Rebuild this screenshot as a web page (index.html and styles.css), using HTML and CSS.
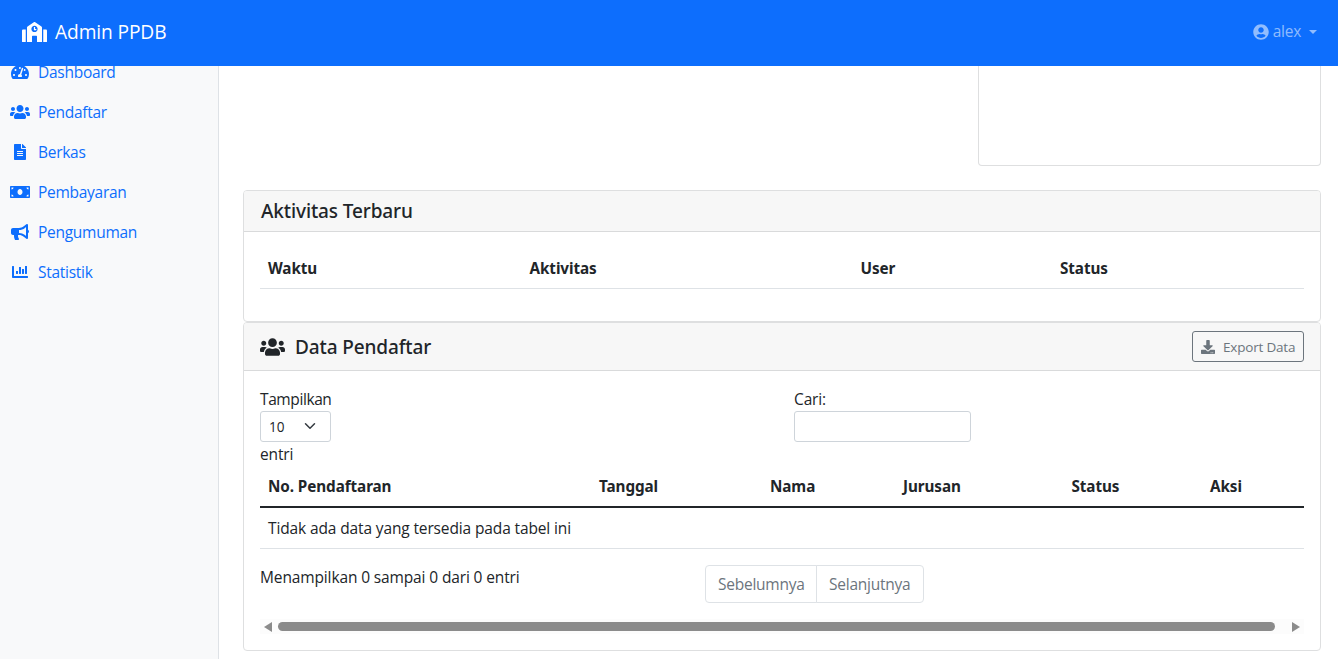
FILE: index.html
```html
<!DOCTYPE html>
<html lang="id">
<head>
<meta charset="utf-8">
<title>Admin PPDB</title>
<link rel="stylesheet" href="styles.css">
</head>
<body>
<svg class="defs" aria-hidden="true">
  <symbol id="users" viewBox="0 0 640 512"><path d="M96 224c35.3 0 64-28.7 64-64s-28.7-64-64-64-64 28.700-64 64 28.700 64 64 64zm448 0c35.300 0 64-28.700 64-64s-28.700-64-64-64-64 28.700-64 64 28.700 64 64 64zm32 32h-64c-17.600 0-33.500 7.100-45.100 18.600 40.300 22.100 68.900 62 75.100 109.400h66c17.700 0 32-14.300 32-32v-32c0-35.300-28.700-64-64-64zm-256 0c61.900 0 112-50.100 112-112S381.900 32 320 32 208 82.100 208 144s50.100 112 112 112zm76.800 32h-8.300c-20.800 10-43.900 16-68.500 16s-47.600-6-68.500-16h-8.300C179.600 288 128 339.600 128 403.200V432c0 26.500 21.500 48 48 48h288c26.500 0 48-21.500 48-48v-28.800c0-63.600-51.600-115.200-115.200-115.200zm-223.700-13.400C161.500 263.100 145.600 256 128 256H64c-35.300 0-64 28.700-64 64v32c0 17.700 14.300 32 32 32h65.900c6.300-47.400 34.900-87.300 75.200-109.400z"/></symbol>
</svg>

<nav class="navbar">
  <a class="brand"><svg class="brand-icon" viewBox="0 0 640 512"><path d="M0 224v272c0 8.840 7.160 16 16 16h80V192H32c-17.670 0-32 14.330-32 32zm360-48h-24v-40c0-4.420-3.580-8-8-8h-16c-4.420 0-8 3.580-8 8v64c0 4.420 3.580 8 8 8h48c4.420 0 8-3.580 8-8v-16c0-4.420-3.580-8-8-8zm137.750-63.960l-160-106.670a32.020 32.020 0 0 0-35.500 0l-160 106.670A32.002 32.002 0 0 0 128 138.660V512h128V368c0-8.840 7.160-16 16-16h96c8.840 0 16 7.160 16 16v144h128V138.670c0-10.700-5.350-20.700-14.250-26.630zM320 256c-44.180 0-80-35.820-80-80s35.820-80 80-80 80 35.820 80 80-35.820 80-80 80zm288-64h-64v320h80c8.840 0 16-7.160 16-16V224c0-17.670-14.330-32-32-32z"/></svg><span>Admin PPDB</span></a>
  <a class="account"><svg class="account-icon" viewBox="0 0 496 512"><path d="M248 8C111 8 0 119 0 256s111 248 248 248 248-111 248-248S385 8 248 8zm0 96c48.600 0 88 39.400 88 88s-39.400 88-88 88-88-39.400-88-88 39.400-88 88-88zm0 344c-58.700 0-111.300-26.600-146.500-68.200 18.800-35.400 55.600-59.800 98.500-59.800 2.400 0 4.800.4 7.100 1.100 13 4.200 26.600 6.900 40.900 6.900 14.300 0 28-2.700 40.900-6.900 2.300-.7 4.700-1.100 7.100-1.100 42.900 0 79.700 24.400 98.500 59.800C359.300 421.400 306.700 448 248 448z"/></svg><span class="user-name">alex</span><i class="caret"></i></a>
</nav>

<div class="layout">
  <aside class="sidebar">
    <a class="side-link"><svg class="side-icon" viewBox="0 0 576 512"><path d="M288 32C128.940 32 0 160.940 0 320c0 52.800 14.250 102.260 39.060 144.800 5.610 9.620 16.300 15.200 27.440 15.200h443c11.140 0 21.830-5.580 27.440-15.200C561.750 422.260 576 372.800 576 320c0-159.060-128.940-288-288-288zm0 64c14.710 0 26.580 10.130 30.320 23.650-1.110 2.260-2.640 4.230-3.450 6.670l-9.220 27.670c-5.130 3.490-10.970 6.010-17.640 6.010-17.670 0-32-14.330-32-32S270.330 96 288 96zM96 384c-17.670 0-32-14.330-32-32s14.330-32 32-32 32 14.330 32 32-14.330 32-32 32zm48-160c-17.670 0-32-14.330-32-32s14.330-32 32-32 32 14.330 32 32-14.330 32-32 32zm246.770-72.410l-61.330 184C343.130 347.330 352 364.540 352 384c0 11.720-3.380 22.550-8.880 32H232.880c-5.500-9.450-8.880-20.280-8.880-32 0-33.940 26.500-61.430 59.900-63.590l61.340-184.010c4.170-12.560 17.730-19.450 30.360-15.170 12.570 4.190 19.350 17.790 15.170 30.360zm14.660 57.200l15.520-46.550c3.470-1.290 7.130-2.230 11.050-2.230 17.670 0 32 14.330 32 32s-14.330 32-32 32c-11.380-.01-20.890-6.280-26.570-15.220zM480 384c-17.670 0-32-14.330-32-32s14.330-32 32-32 32 14.330 32 32-14.330 32-32 32z"/></svg><span>Dashboard</span></a>
    <a class="side-link"><svg class="side-icon"><use href="#users"/></svg><span>Pendaftar</span></a>
    <a class="side-link"><svg class="side-icon" viewBox="0 0 384 512"><path d="M224 136V0H24C10.700 0 0 10.700 0 24v464c0 13.300 10.700 24 24 24h336c13.300 0 24-10.700 24-24V160H248c-13.200 0-24-10.800-24-24zm64 236c0 6.600-5.400 12-12 12H108c-6.600 0-12-5.400-12-12v-8c0-6.600 5.400-12 12-12h168c6.600 0 12 5.400 12 12v8zm0-64c0 6.600-5.400 12-12 12H108c-6.600 0-12-5.400-12-12v-8c0-6.600 5.400-12 12-12h168c6.600 0 12 5.400 12 12v8zm0-72v8c0 6.600-5.400 12-12 12H108c-6.600 0-12-5.400-12-12v-8c0-6.600 5.400-12 12-12h168c6.600 0 12 5.400 12 12zm96-114.100v6.100H256V0h6.100c6.400 0 12.500 2.500 17 7l97.900 98c4.500 4.500 7 10.600 7 16.900z"/></svg><span>Berkas</span></a>
    <a class="side-link"><svg class="side-icon" viewBox="0 0 640 512"><path d="M608 64H32C14.330 64 0 78.330 0 96v320c0 17.670 14.330 32 32 32h576c17.670 0 32-14.330 32-32V96c0-17.670-14.330-32-32-32zM48 400v-64c35.350 0 64 28.650 64 64H48zm0-224v-64h64c0 35.350-28.650 64-64 64zm272 176c-44.190 0-80-42.990-80-96 0-53.020 35.820-96 80-96s80 42.980 80 96c0 53.030-35.830 96-80 96zm272 48h-64c0-35.350 28.650-64 64-64v64zm0-224c-35.350 0-64-28.650-64-64h64v64z"/></svg><span>Pembayaran</span></a>
    <a class="side-link"><svg class="side-icon" viewBox="0 0 576 512"><path d="M576 240c0-23.630-12.950-44.040-32-55.120V32.010C544 23.260 537.020 0 512 0c-7.120 0-14.190 2.380-19.980 7.020l-85.030 68.030C364.280 109.190 310.660 128 256 128H64c-35.350 0-64 28.650-64 64v96c0 35.350 28.650 64 64 64h33.700c-1.390 10.480-2.180 21.140-2.180 32 0 39.770 9.260 77.350 25.560 110.940 5.190 10.690 16.520 17.060 28.400 17.060h74.280c26.050 0 41.690-29.840 25.900-50.560-16.400-21.520-26.150-48.360-26.150-77.440 0-11.110 1.620-21.790 4.410-32H256c54.660 0 108.280 18.810 150.980 52.950l85.030 68.030a32.023 32.023 0 0 0 19.980 7.020c24.920 0 32-22.780 32-32V295.130C563.050 284.040 576 263.630 576 240zm-96 141.420l-33.050-26.440C392.950 311.780 325.120 288 256 288v-96c69.120 0 136.950-23.780 190.950-66.980L480 98.580v282.840z"/></svg><span>Pengumuman</span></a>
    <a class="side-link"><svg class="side-icon" viewBox="0 0 512 512"><path d="M332.800 320h38.400c6.400 0 12.800-6.400 12.800-12.800V172.800c0-6.400-6.400-12.800-12.800-12.800h-38.400c-6.400 0-12.800 6.400-12.800 12.800v134.400c0 6.400 6.400 12.800 12.800 12.800zm96 0h38.400c6.400 0 12.800-6.400 12.800-12.800V76.800c0-6.400-6.400-12.800-12.800-12.800h-38.400c-6.400 0-12.800 6.400-12.800 12.800v230.400c0 6.400 6.400 12.800 12.800 12.800zm-288 0h38.400c6.400 0 12.800-6.400 12.800-12.800v-70.400c0-6.400-6.400-12.800-12.800-12.800h-38.400c-6.400 0-12.800 6.400-12.800 12.800v70.400c0 6.400 6.400 12.800 12.800 12.800zm96 0h38.400c6.400 0 12.800-6.400 12.800-12.800V108.800c0-6.400-6.400-12.800-12.800-12.800h-38.400c-6.400 0-12.800 6.400-12.800 12.800v198.400c0 6.400 6.400 12.800 12.800 12.800zM496 384H64V80c0-8.840-7.160-16-16-16H16C7.160 64 0 71.160 0 80v336c0 17.670 14.330 32 32 32h464c8.840 0 16-7.160 16-16v-32c0-8.840-7.160-16-16-16z"/></svg><span>Statistik</span></a>
  </aside>

  <main class="content">
    <div class="card chart-card"></div>

    <section class="card activity">
      <header class="card-header"><h5 class="activity-title">Aktivitas Terbaru</h5></header>
      <div class="card-body">
        <table class="table activity-table">
          <colgroup><col class="a1"><col class="a2"><col class="a3"><col></colgroup>
          <thead><tr><th>Waktu</th><th>Aktivitas</th><th>User</th><th>Status</th></tr></thead>
        </table>
      </div>
    </section>

    <section class="card applicants">
      <header class="card-header split">
        <h5><svg class="title-icon"><use href="#users"/></svg>Data Pendaftar</h5>
        <button class="export"><svg class="export-icon" viewBox="0 0 512 512"><path d="M216 0h80c13.300 0 24 10.700 24 24v168h87.700c17.800 0 26.700 21.500 14.100 34.100L269.700 378.300c-7.500 7.500-19.800 7.500-27.300 0L90.100 226.100c-12.600-12.600-3.700-34.100 14.100-34.100H192V24c0-13.300 10.700-24 24-24zm296 376v112c0 13.300-10.700 24-24 24H24c-13.300 0-24-10.700-24-24V376c0-13.300 10.700-24 24-24h146.700l49 49c20.100 20.100 52.500 20.100 72.600 0l49-49H488c13.300 0 24 10.700 24 24zm-124 88c0-11-9-20-20-20s-20 9-20 20 9 20 20 20 20-9 20-20zm64 0c0-11-9-20-20-20s-20 9-20 20 9 20 20 20 20-9 20-20z"/></svg><span>Export Data</span></button>
      </header>
      <div class="card-body">
        <div class="filters">
          <div class="length"><span class="tight">Tampilkan</span><div class="select"><span>10</span><svg class="chevron" viewBox="0 0 16 16"><path d="m2 5 6 6 6-6"/></svg></div><span>entri</span></div>
          <label class="search"><span>Cari:</span><input type="text"></label>
        </div>
        <table class="table data-table">
          <colgroup><col class="d1"><col class="d2"><col class="d3"><col class="d4"><col class="d5"><col></colgroup>
          <thead><tr><th>No. Pendaftaran</th><th>Tanggal</th><th>Nama</th><th>Jurusan</th><th>Status</th><th>Aksi</th></tr></thead>
          <tbody><tr><td colspan="6">Tidak ada data yang tersedia pada tabel ini</td></tr></tbody>
        </table>
        <div class="table-footer">
          <div class="info">Menampilkan 0 sampai 0 dari 0 entri</div>
          <div class="pagination"><a>Sebelumnya</a><a>Selanjutnya</a></div>
        </div>
        <div class="scrollbar"><i class="arrow-left"></i><i class="thumb"></i><i class="arrow-right"></i></div>
      </div>
    </section>
  </main>
</div>
</body>
</html>
```
FILE: styles.css
```css
* { box-sizing: border-box; }
body {
  margin: 0;
  height: 659px;
  overflow: hidden;
  background: #fff;
  color: #212529;
  font: 15.5px/24px "Open Sans", "Noto Sans", sans-serif;
  letter-spacing: -0.13px;
}
svg { fill: currentColor; flex: none; }
.defs { display: none; }

.navbar {
  position: relative;
  z-index: 1;
  display: flex;
  justify-content: space-between;
  align-items: center;
  height: 66px;
  padding: 0 21px 3px 22px;
  background: #0d6efd;
  color: #fff;
}
.brand { display: flex; align-items: center; gap: 8px; font-size: 19.2px; letter-spacing: -0.12px; }
.brand-icon { width: 25px; height: 20px; }
.account { display: flex; align-items: center; gap: 4px; color: rgba(255, 255, 255, 0.55); letter-spacing: -0.25px; }
.account-icon { width: 16px; height: 16px; }
.user-name { padding-bottom: 1px; }
.caret {
  margin-left: 4px;
  border: 4px solid transparent;
  border-top-color: currentColor;
  border-bottom: 0;
}

.layout { display: flex; height: 593px; }
.sidebar {
  flex: none;
  width: 219px;
  background: #f8f9fa;
  border-right: 1px solid #dee2e6;
}
.side-link {
  display: flex;
  align-items: center;
  gap: 8px;
  height: 40px;
  padding-left: 10px;
  color: #0d6efd;
  letter-spacing: -0.27px;
}
.side-link:first-child { height: 26px; align-items: flex-start; line-height: 12px; }
.side-link:first-child .side-icon { margin-top: -2px; }
.side-icon { width: 20px; height: 16px; }

.content { flex: 1; padding: 0 17px 0 24px; }
.card { background: #fff; border: 1px solid #dedfe0; border-radius: 4px; }
.chart-card {
  width: 343px;
  height: 100px;
  margin: 0 0 24px auto;
  border-top: 0;
  border-radius: 0 0 4px 4px;
}
.card-header {
  padding: 8px 16px;
  background: #f7f7f7;
  border-bottom: 1px solid #d9dadb;
  border-radius: 3px 3px 0 0;
}
.split { display: flex; justify-content: space-between; align-items: center; height: 48px; }
h5 {
  display: flex;
  align-items: center;
  margin: 0;
  font: 500 19px/24px "Noto Sans", sans-serif;
  letter-spacing: -0.12px;
}
.activity-title { padding: 1px 0 0 1px; line-height: 23px; }
.title-icon { width: 25px; height: 20px; margin-right: 10px; }
.card-body { padding: 16px; }

.table { width: 100%; table-layout: fixed; border-collapse: separate; border-spacing: 0; }
th, td { padding: 8px; text-align: left; border-bottom: 1px solid #dee2e6; }
th { font: bold 15.25px/24px "Noto Sans", sans-serif; letter-spacing: -0.08px; }
.activity-table { margin-bottom: 16px; }
.a1 { width: 261.500px; }
.a2 { width: 331px; }
.a3 { width: 199.500px; }
.d1 { width: 331px; }
.d2 { width: 171px; }
.d3 { width: 133px; }
.d4 { width: 168.500px; }
.d5 { width: 138.500px; }
.data-table th { border-bottom: 2px solid #212529; }

.export {
  display: flex;
  align-items: center;
  gap: 8px;
  width: 112px;
  height: 31px;
  padding: 1px 8px 0;
  background: transparent;
  border: 1px solid #6c757d;
  border-radius: 3px;
  color: #6c757d;
  font: 13.5px/21px "Open Sans", sans-serif;
  letter-spacing: -0.2px;
  white-space: nowrap;
}
.export-icon { width: 14px; height: 14px; }

.filters { display: grid; grid-template-columns: 534px 1fr; align-items: start; }
.length, .search { display: flex; flex-direction: column; align-items: flex-start; }
.tight { letter-spacing: -0.4px; }
.select {
  display: flex;
  align-items: center;
  justify-content: space-between;
  width: 71px;
  height: 31px;
  padding: 0 14px 0 8px;
  border: 1px solid #ced4da;
  border-radius: 3px;
  font-size: 13.6px;
}
.chevron { width: 12px; height: 12px; margin-bottom: 2px; fill: none; stroke: #343a40; stroke-width: 2; stroke-linecap: round; stroke-linejoin: round; }
.search input { width: 177px; height: 31px; padding: 0 8px; border: 1px solid #ced4da; border-radius: 3px; }

.table-footer { display: grid; grid-template-columns: 445px 1fr; margin-top: 16px; }
.pagination { display: flex; color: #6c757d; letter-spacing: -0.24px; }
.pagination a { padding: 6px 12px; border: 1px solid #dee2e6; }
.pagination a:first-child { width: 112px; border-radius: 4px 0 0 4px; }
.pagination a:last-child { width: 108px; margin-left: -1px; border-radius: 0 4px 4px 0; }

.scrollbar {
  display: flex;
  align-items: center;
  height: 15px;
  margin-top: 16px;
  padding: 0 4px;
  background: #fcfcfc;
}
.arrow-left, .arrow-right { border: 5px solid transparent; }
.arrow-left { border-left: 0; border-right: 8px solid #8b8b8b; }
.arrow-right { border-right: 0; border-left: 8px solid #8b8b8b; }
.thumb { flex: 1; height: 9px; margin: 0 17px 0 6px; border-radius: 5px; background: #8b8b8b; }
```
